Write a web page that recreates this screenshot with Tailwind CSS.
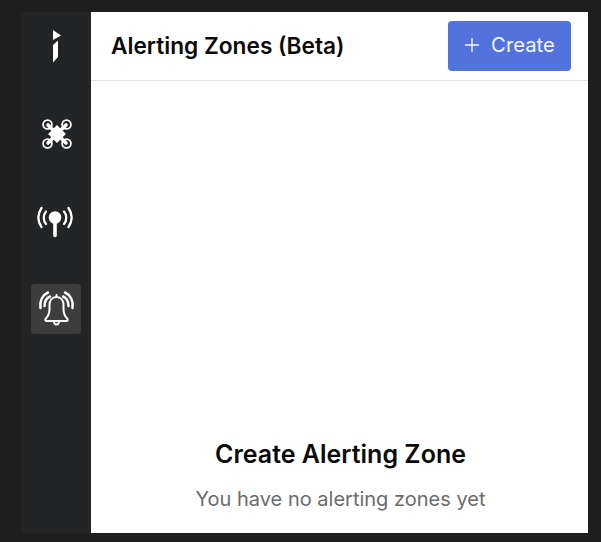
<!DOCTYPE html>
<html>
<head>
<meta charset="utf-8">
<script src="https://cdn.jsdelivr.net/npm/@tailwindcss/browser@4"></script>
</head>
<body class="bg-[#1e1e1e] font-['Inter',sans-serif]">
<div class="flex h-[542px] w-[601px] pl-[21px] pr-[13px] pt-[12px] pb-[9px]">
  <aside class="flex w-[70px] flex-col items-center bg-[#222426]">
    <div class="flex h-[70px] w-full justify-center pl-[1px]">
      <svg class="mt-[17px]" width="10" height="36" viewBox="0 0 10 36"><path d="M1 1L9 6.500L1 11ZM6 11.500V28L1 33.500V16Z" fill="#fff"/></svg>
    </div>
    <div class="mt-[36px] flex h-[34px] w-full justify-center pl-[1px]">
      <svg width="32" height="32" viewBox="0 0 32 32" fill="none" stroke="#fff" stroke-linecap="round">
        <path d="M7 7L25 25M25 7L7 25" stroke-width="3.600"/>
        <path d="M16 8.500L23.500 16L16 23.500L8.500 16Z" fill="#fff" stroke-width="2"/>
        <circle cx="6.500" cy="6.500" r="4.400" stroke-width="1.800"/><circle cx="25.500" cy="6.500" r="4.400" stroke-width="1.800"/><circle cx="6.500" cy="25.500" r="4.400" stroke-width="1.800"/><circle cx="25.500" cy="25.500" r="4.400" stroke-width="1.800"/>
      </svg>
    </div>
    <div class="mt-[50px] flex h-[36px] w-full justify-center pr-[2px]">
      <svg width="36" height="36" viewBox="0 0 36 36" fill="none" stroke="#fff" stroke-linecap="round">
        <circle cx="18" cy="15.500" r="6.300" fill="#fff" stroke="none"/>
        <path d="M18 18V33.500" stroke-width="3.600"/>
        <path d="M9 9.500C6 13 6 18.500 9 22M27 9.500C30 13 30 18.500 27 22" stroke-width="2.300"/>
        <path d="M4.500 6C0.500 12 0.500 19 4.500 25M31.500 6C35.500 12 35.500 19 31.500 25" stroke-width="2.300"/>
      </svg>
    </div>
    <div class="mt-[46px] flex h-[50px] w-[50px] items-center justify-center rounded-[4px] bg-[#3d3d3d]">
      <svg width="40" height="40" viewBox="0 0 40 40" fill="none" stroke="#fff" stroke-linecap="round" stroke-linejoin="round">
        <path d="M20.500 6L20.500 8M20.500 8C16 8 13.500 11.500 13.500 16V20C13.500 25 12 27.500 9.500 30C9 31.500 9.500 32 10.500 32H30.500C31.500 32 32 31.500 31.500 30C29 27.500 27.500 25 27.500 20V16C27.500 11.500 25 8 20.500 8Z" stroke-width="2"/>
        <path d="M18 32.500C18 36.500 23 36.500 23 32.500" stroke-width="1.800"/>
        <path d="M8.500 17C8.500 12.500 10.500 9 14 7.500M32.500 17C32.500 12.500 30.500 9 27 7.500" stroke-width="2.500"/>
        <path d="M4.500 19C3.500 12 6.500 6 12 3.500M36.500 19C37.500 12 34.500 6 29 3.500" stroke-width="2.500"/>
      </svg>
    </div>
  </aside>
  <main class="flex min-w-0 flex-1 flex-col bg-white">
    <header class="flex h-[69px] shrink-0 items-center justify-between border-b border-[#e3e3e3] pl-[20px] pr-[17px]">
      <h1 class="text-[22.700px] leading-[28px] font-semibold text-[#0a0a0a]">Alerting Zones (Beta)</h1>
      <button class="flex h-[50px] w-[123px] items-center justify-center gap-[11px] rounded-[4px] bg-[#5273dc] pb-[2px] text-[20.300px] text-[#f5f7ff]">
        <svg width="16" height="16" viewBox="0 0 16 16" stroke="#f5f7ff" stroke-width="1.400"><path d="M8 1V15M1 8H15"/></svg>
        <span>Create</span>
      </button>
    </header>
    <div class="flex flex-1 flex-col items-center justify-end pb-[20px] pl-[2px]">
      <h2 class="text-[25px] leading-[32px] font-semibold text-[#0a0a0a]">Create Alerting Zone</h2>
      <p class="mt-[15px] text-[20px] leading-[28px] text-[#6b6b6b]">You have no alerting zones yet</p>
    </div>
  </main>
</div>
</body>
</html>
